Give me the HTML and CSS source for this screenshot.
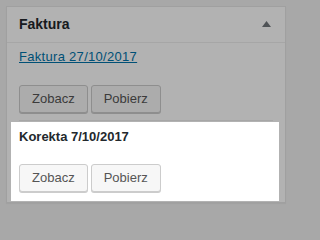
FILE: index.html
```html
<!DOCTYPE html>
<html lang="pl">
<head>
<meta charset="utf-8">
<title>Faktura</title>
<link rel="stylesheet" href="styles.css">
</head>
<body>
<div class="postbox">
  <div class="postbox-header">
    <h2 class="hndle">Faktura</h2>
    <svg class="toggle" width="9" height="6" viewBox="0 0 9 6" aria-hidden="true"><polygon points="4.5,0 9,6 0,6" fill="#72777c"/></svg>
  </div>
  <div class="inside">
    <div class="doc">
      <p class="doc-title"><a href="#" class="doc-link">Faktura 27/10/2017</a></p>
      <div class="actions">
        <button class="button">Zobacz</button>
        <button class="button">Pobierz</button>
      </div>
    </div>
    <div class="separator"></div>
    <div class="doc highlighted">
      <p class="doc-title doc-title-strong">Korekta 7/10/2017</p>
      <div class="actions">
        <button class="button">Zobacz</button>
        <button class="button">Pobierz</button>
      </div>
    </div>
  </div>
</div>
</body>
</html>
```

FILE: styles.css
```css
html {
  height: 100%;
  background: #f1f1f1;
  overflow: hidden;
}
body {
  box-sizing: border-box;
  min-height: 100%;
  margin: 0;
  padding: 6px 8px 0 6px;
  font-family: "Liberation Sans", Arial, sans-serif;
  font-size: 13px;
  color: #444;
}
.postbox {
  box-sizing: border-box;
  width: 280px;
  background: #fff;
  border: 1px solid #e5e5e5;
  box-shadow: 0 1px 1px rgba(0,0,0,.04);
}
.postbox-header {
  display: flex;
  align-items: center;
  justify-content: space-between;
  border-bottom: 1px solid #eee;
  padding: 7px 14px 8px 12px;
}
.hndle {
  margin: 0;
  font-size: 14px;
  line-height: 20px;
  font-weight: 700;
  color: #23282d;
}
.toggle {
  display: block;
  margin-top: -1px;
}
.inside {
  padding: 0 12px 1px;
}
.doc {
  display: flex;
  flex-direction: column;
}
.doc-title {
  margin: 5px 0 0;
  line-height: 18px;
}
.doc-title-strong {
  margin: 0;
  font-weight: 700;
  color: #23282d;
}
.doc-link {
  color: #0073aa;
  text-decoration: underline;
  letter-spacing: 0.3px;
}
.actions {
  display: flex;
  gap: 3px;
  margin-top: 19px;
}
.highlighted .actions {
  margin-top: 18px;
}
.button {
  font-family: inherit;
  font-size: 13px;
  height: 28px;
  line-height: 26px;
  padding: 0 12px;
  color: #555;
  background: #f7f7f7;
  border: 1px solid #ccc;
  border-radius: 3px;
  box-shadow: 0 1px 0 #ccc;
  cursor: pointer;
}
.separator {
  height: 1px;
  background: #eee;
  margin: 7px 0 1px;
}
.highlighted {
  position: relative;
  z-index: 10;
  background: #fff;
  margin: 0 -6px 0 -8px;
  padding: 6px 6px 9px 8px;
  box-shadow: 0 0 0 9999px rgba(0,0,0,.3);
}
```
